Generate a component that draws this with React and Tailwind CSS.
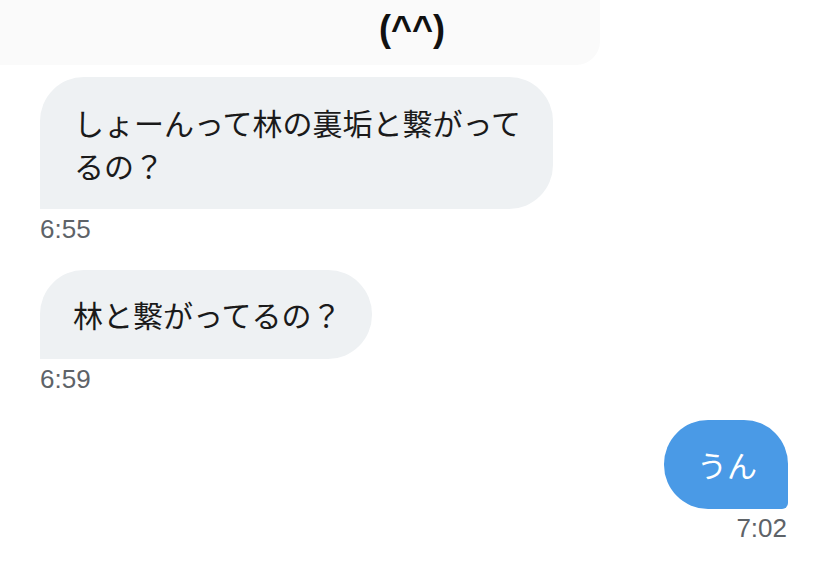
import React from 'react';

const jp = { fontFamily: '"Noto Sans CJK JP", "Noto Sans", sans-serif' };

// 受信メッセージ
const Received = ({ children, time, className }) => (
    <div className="flex flex-col items-start pl-[40px]">
        <div className={`bg-[#eef1f3] text-[#1a1a1a] text-[30px] leading-[43px] rounded-[44px] rounded-bl-none ${className}`} style={jp}>
            {children}
        </div>
        <div className="mt-[5px] text-[26px] leading-[30px] text-[#5e6368] font-['Liberation_Sans',sans-serif]">{time}</div>
    </div>
);

export default function App() {
    return (
        <div className="w-[827px] h-[565px] bg-white overflow-hidden">
            {/* 前のメッセージ(画像)の下端 */}
            <div className="w-[600px] h-[65px] bg-[#fafafa] rounded-br-[24px] flex items-start pl-[379px] pt-[8px]">
                <span className="text-[36px] leading-[42px] font-bold text-[#111] font-['Liberation_Sans',sans-serif]">(^^)</span>
            </div>

            <div className="mt-[12px]">
                <Received time="6:55" className="w-[513px] pl-[34px] pr-[28px] pt-[24px] pb-[22px]">
                    しょーんって林の裏垢と繋がってるの？
                </Received>
            </div>

            <div className="mt-[26px]">
                <Received time="6:59" className="pl-[33px] pr-[30px] pt-[23px] pb-[23px]">
                    林と繋がってるの？
                </Received>
            </div>

            <div className="mt-[26px] flex flex-col items-end pr-[39px]">
                <div className="bg-[#4a9ae6] text-white text-[30px] leading-[43px] rounded-[44px] rounded-br-[6px] pl-[33px] pr-[31px] pt-[23px] pb-[23px]" style={jp}>
                    うん
                </div>
                <div className="mt-[4px] mr-[1px] text-[26px] leading-[30px] text-[#5e6368] font-['Liberation_Sans',sans-serif]">7:02</div>
            </div>
        </div>
    );
}
